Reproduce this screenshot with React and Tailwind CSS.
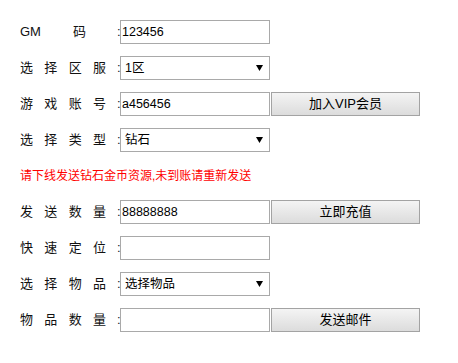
import React from "react";

const font = { fontFamily: '"Liberation Sans", "Noto Sans CJK SC", sans-serif' };

function Label({ chars }) {
  return (
    <div className="flex items-center">
      <div className="flex w-[86px] justify-between text-[13px] text-[#111]">
        {chars.map((c, i) => (
          <span key={i}>{c}</span>
        ))}
      </div>
      <span className="ml-[11px] w-[3px] text-[13px] text-[#222]">:</span>
    </div>
  );
}

function Input({ value }) {
  return (
    <div className="flex h-[24px] w-[150px] items-center border border-[#a9a9a9] bg-white pl-[1px] text-[12.5px] text-black">
      {value}
    </div>
  );
}

function Select({ value }) {
  return (
    <div className="flex h-[24px] w-[150px] items-center justify-between border border-[#a9a9a9] bg-white pl-[4px] pr-[6px] text-[12.5px] text-black">
      <span>{value}</span>
      <svg width="7" height="6" viewBox="0 0 7 6">
        <polygon points="0,0 7,0 3.5,6" fill="#000" />
      </svg>
    </div>
  );
}

function Btn({ children }) {
  return (
    <div className="ml-[1px] flex h-[24px] w-[149px] items-center justify-center border border-[#a3a3a3] bg-gradient-to-b from-[#f4f4f4] to-[#dcdcdc] text-[13px] text-black">
      {children}
    </div>
  );
}

function Row({ children }) {
  return <div className="flex h-[24px] items-center">{children}</div>;
}

export default function App() {
  return (
    <div className="w-[458px] h-[363px] bg-white pl-[20px] pt-[20px]" style={font}>
      <div className="flex flex-col gap-[12px]">
        <Row>
          <div className="flex items-center">
            <div className="flex w-[86px] text-[13px] text-[#111]">
              <span>GM</span>
              <span className="ml-[32px]">码</span>
            </div>
            <span className="ml-[11px] w-[3px] text-[13px] text-[#222]">:</span>
          </div>
          <Input value="123456" />
        </Row>
        <Row>
          <Label chars={["选", "择", "区", "服"]} />
          <Select value="1区" />
        </Row>
        <Row>
          <Label chars={["游", "戏", "账", "号"]} />
          <Input value="a456456" />
          <Btn>加入VIP会员</Btn>
        </Row>
        <Row>
          <Label chars={["选", "择", "类", "型"]} />
          <Select value="钻石" />
        </Row>
        <Row>
          <span className="text-[12px] text-[#ff0000]">请下线发送钻石金币资源,未到账请重新发送</span>
        </Row>
        <Row>
          <Label chars={["发", "送", "数", "量"]} />
          <Input value="88888888" />
          <Btn>立即充值</Btn>
        </Row>
        <Row>
          <Label chars={["快", "速", "定", "位"]} />
          <Input value="" />
        </Row>
        <Row>
          <Label chars={["选", "择", "物", "品"]} />
          <Select value="选择物品" />
        </Row>
        <Row>
          <Label chars={["物", "品", "数", "量"]} />
          <Input value="" />
          <Btn>发送邮件</Btn>
        </Row>
      </div>
    </div>
  );
}
